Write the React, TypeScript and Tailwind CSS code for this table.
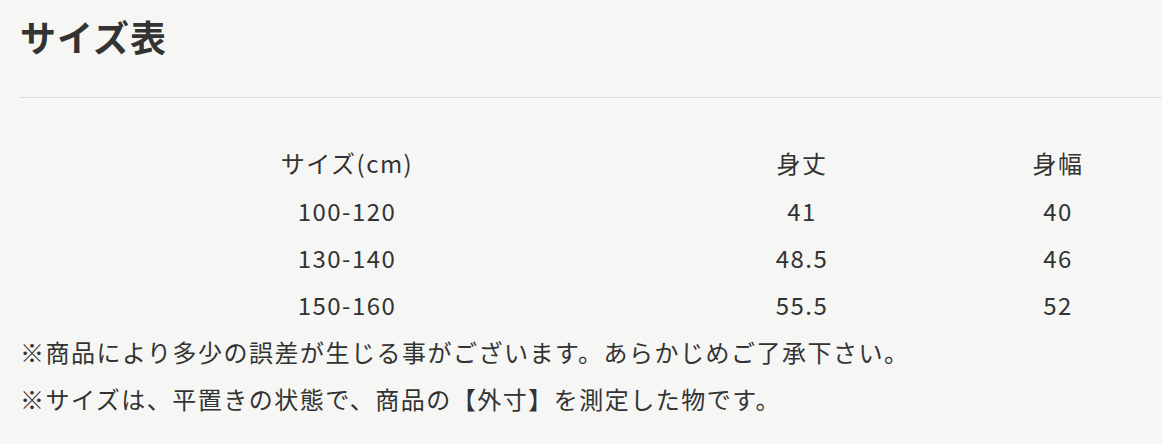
const rows = [
  { size: '100-120', length: '41', width: '40' },
  { size: '130-140', length: '48.5', width: '46' },
  { size: '150-160', length: '55.5', width: '52' },
];

const notes = [
  '※商品により多少の誤差が生じる事がございます。あらかじめご了承下さい。',
  '※サイズは、平置きの状態で、商品の【外寸】を測定した物です。',
];

export default function App() {
  return (
    <div
      className="h-[444px] overflow-hidden bg-[#f6f7f5] pl-[20px] text-[#333333]"
      style={{ fontFamily: '"Noto Sans CJK JP", "Noto Sans", sans-serif' }}
    >
      {/* Heading */}
      <h2 className="w-[1200px] border-b border-dotted border-[#c8c8c8] pt-[11px] pb-[35px] text-[36px] font-bold leading-[51px] tracking-[1px]">
        サイズ表
      </h2>

      {/* Size table */}
      <div className="mt-[41px] grid grid-cols-[654px_256px_256px] text-[24px] tracking-[1.5px]">
        <div className="flex h-[48px] items-center justify-center">サイズ(cm)</div>
        <div className="flex h-[48px] items-center justify-center">身丈</div>
        <div className="flex h-[48px] items-center justify-center">身幅</div>
        {rows.map((r) => (
          <div key={r.size} className="contents">
            <div className="flex h-[47px] items-center justify-center">{r.size}</div>
            <div className="flex h-[47px] items-center justify-center">{r.length}</div>
            <div className="flex h-[47px] items-center justify-center">{r.width}</div>
          </div>
        ))}
      </div>

      {/* Notes */}
      <div className="text-[24px] tracking-[1.5px]">
        {notes.map((n) => (
          <p key={n} className="flex h-[47px] items-center whitespace-nowrap">
            {n}
          </p>
        ))}
      </div>
    </div>
  );
}
